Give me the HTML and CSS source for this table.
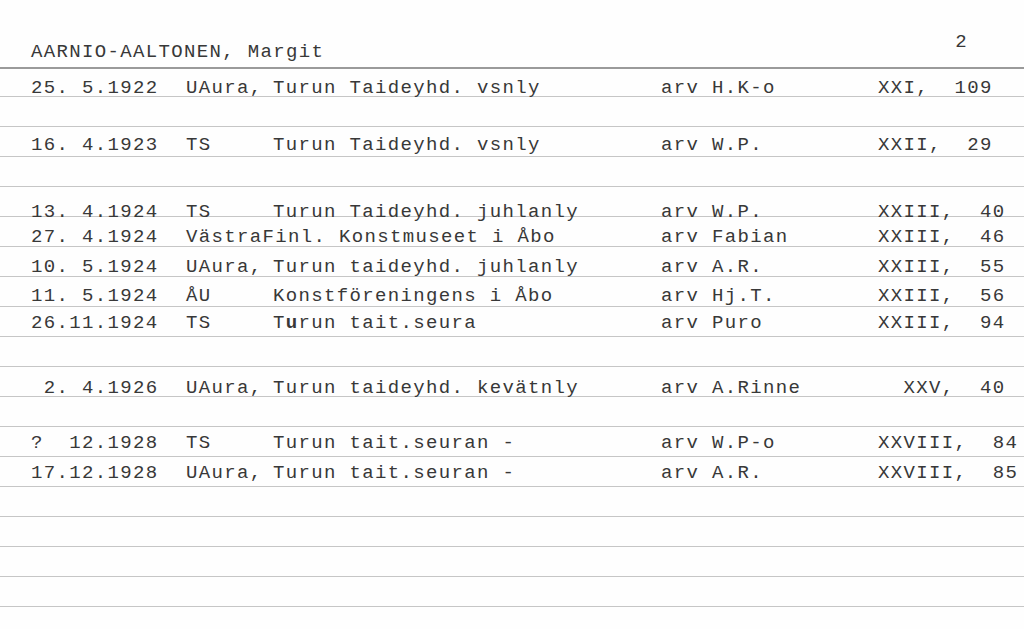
FILE: index.html
```html
<!DOCTYPE html>
<html lang="fi">
<head>
<meta charset="utf-8">
<title>AARNIO-AALTONEN, Margit</title>
<link rel="stylesheet" href="styles.css">
</head>
<body>
<div class="card">
  <div class="card-head">
    <span class="name">AARNIO-AALTONEN, Margit</span>
    <span class="sheet-no">2</span>
  </div>

  <div class="row first pt11"><span>25. 5.1922</span><span>UAura,</span><span>Turun Taideyhd. vsnly</span><span>arv H.K-o</span><span>XXI,  109</span></div>
  <div class="row"></div>
  <div class="row pt10"><span>16. 4.1923</span><span>TS</span><span>Turun Taideyhd. vsnly</span><span>arv W.P.</span><span>XXII,  29</span></div>
  <div class="row"></div>
  <div class="row pt17"><span>13. 4.1924</span><span>TS</span><span>Turun Taideyhd. juhlanly</span><span>arv W.P.</span><span>XXIII,  40</span></div>
  <div class="row pt12"><span>27. 4.1924</span><span class="span2">VästraFinl. Konstmuseet i Åbo</span><span>arv Fabian</span><span>XXIII,  46</span></div>
  <div class="row pt12"><span>10. 5.1924</span><span>UAura,</span><span>Turun taideyhd. juhlanly</span><span>arv A.R.</span><span>XXIII,  55</span></div>
  <div class="row pt11"><span>11. 5.1924</span><span>ÅU</span><span>Konstföreningens i Åbo</span><span>arv Hj.T.</span><span>XXIII,  56</span></div>
  <div class="row pt8"><span>26.11.1924</span><span>TS</span><span>T<b class="over">u</b>run tait.seura</span><span>arv Puro</span><span>XXIII,  94</span></div>
  <div class="row"></div>
  <div class="row pt13"><span> 2. 4.1926</span><span>UAura,</span><span>Turun taideyhd. kevätnly</span><span>arv A.Rinne</span><span>  XXV,  40</span></div>
  <div class="row"></div>
  <div class="row pt8"><span>?  12.1928</span><span>TS</span><span>Turun tait.seuran -</span><span>arv W.P-o</span><span>XXVIII,  84</span></div>
  <div class="row pt8"><span>17.12.1928</span><span>UAura,</span><span>Turun tait.seuran -</span><span>arv A.R.</span><span>XXVIII,  85</span></div>
  <div class="row"></div>
  <div class="row"></div>
  <div class="row"></div>
  <div class="row"></div>
  <div class="row last"></div>
</div>
</body>
</html>
```

FILE: styles.css
```css
html, body {
  margin: 0;
  padding: 0;
  background: #ffffff;
}

body {
  font-family: "Liberation Mono", "DejaVu Sans Mono", monospace;
  font-size: 19px;
  line-height: 17px;
  letter-spacing: 1.35px;
  color: #383838;
}

.card {
  width: 1024px;
  height: 629px;
  overflow: hidden;
  background: #fefefe;
}

.card-head {
  box-sizing: border-box;
  height: 69px;
  padding: 34px 0 0 31px;
  display: flex;
  align-items: flex-start;
  border-bottom: 2px solid #9a9a9a;
}

.name {
  margin-top: 10px;
  white-space: pre;
}

.sheet-no {
  margin-left: auto;
  margin-right: 56px;
}

.row {
  box-sizing: border-box;
  height: 30px;
  padding-left: 31px;
  display: grid;
  grid-template-columns: 155px 87px 388px 217px 1fr;
  align-items: start;
  white-space: pre;
  border-bottom: 1px solid #c6c6c6;
}

.row.first {
  height: 28px;
}

.row.last {
  border-bottom: none;
}

.span2 {
  grid-column: span 2;
}

.over {
  font-weight: bold;
}

.pt8  { padding-top: 8px; }
.pt10 { padding-top: 10px; }
.pt11 { padding-top: 11px; }
.pt12 { padding-top: 12px; }
.pt13 { padding-top: 13px; }
.pt17 { padding-top: 17px; }
```
